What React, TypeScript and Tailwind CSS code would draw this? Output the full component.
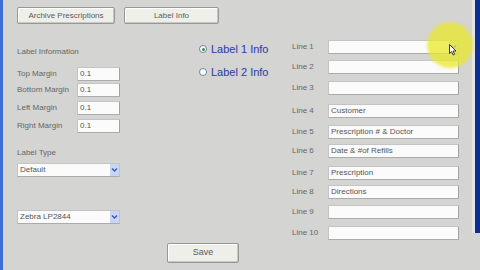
import React from 'react';

const font = "font-['Liberation_Sans',Arial,sans-serif]";

function TextBox({ value, className = '' }: { value?: string; className?: string }) {
  return (
    <div
      className={`h-[14px] bg-[#fbfbfb] border border-[#c4c4c4] border-r-[#a2a2a2] border-b-[#ababab] rounded-[1px] px-[2px] flex items-center text-[8px] text-[#555] leading-none ${className}`}
    >
      {value}
    </div>
  );
}

function Combo({ value, className = '' }: { value?: string; className?: string }) {
  return (
    <div
      className={`h-[14px] bg-[#fbfbfb] border border-[#c4c4c4] border-b-[#ababab] flex items-center text-[8px] text-[#555] leading-none ${className}`}
    >
      <span className="flex-1 px-[2px] truncate">{value}</span>
      <span className="w-[9px] h-[12px] bg-[#c9d6f2] flex items-center justify-center">
        <svg width="7" height="6" viewBox="0 0 7 6">
          <path d="M1 1.5 L3.5 4 L6 1.5" stroke="#3b5bb5" strokeWidth="1.4" fill="none" />
        </svg>
      </span>
    </div>
  );
}

function MarginRow({ label, mt }: { label: string; mt: string }) {
  return (
    <div className={`flex items-center justify-between h-[14px] w-[103px] ${mt}`}>
      <span className="text-[8px] text-[#666]">{label}</span>
      <TextBox value="0.1" className="w-[43px]" />
    </div>
  );
}

function Btn({ label, className = '' }: { label: string; className?: string }) {
  return (
    <div
      className={`bg-[#efefea] border border-[#979797] rounded-[2px] shadow-[inset_-1px_-1px_0_#c8c8c4,inset_1px_1px_0_#ffffff] flex items-center justify-center text-[8px] text-[#5a5a5a] ${className}`}
    >
      {label}
    </div>
  );
}

function Radio({ label, checked, mt }: { label: string; checked?: boolean; mt: string }) {
  return (
    <div className={`flex items-center h-[12px] ${mt}`}>
      <span className="w-[8px] h-[8px] rounded-full border border-[#6d7fa8] bg-white flex items-center justify-center">
        {checked && <span className="w-[3px] h-[3px] rounded-full bg-[#3b8a4a]" />}
      </span>
      <span className="ml-[4px] text-[11px] text-[#2b3f96] [text-shadow:0_0_2px_#c8c8f0]">{label}</span>
    </div>
  );
}

const lines: { n: number; value?: string; mt: string; combo?: boolean }[] = [
  { n: 1, mt: 'mt-[16px]', combo: true },
  { n: 2, mt: 'mt-[6px]' },
  { n: 3, mt: 'mt-[7px]' },
  { n: 4, value: 'Customer', mt: 'mt-[9px]' },
  { n: 5, value: 'Prescription # & Doctor', mt: 'mt-[7px]' },
  { n: 6, value: 'Date & #of Refills', mt: 'mt-[5px]' },
  { n: 7, value: 'Prescription', mt: 'mt-[8px]' },
  { n: 8, value: 'Directions', mt: 'mt-[5px]' },
  { n: 9, mt: 'mt-[6px]' },
  { n: 10, mt: 'mt-[7px]' },
];

export default function App() {
  return (
    <div className={`relative w-[480px] h-[270px] overflow-hidden bg-[#d4d4d2] flex ${font}`}>
      <div className="w-[3px] h-full bg-[#3a6ed6]" />

      <div className="flex-1 flex flex-col">
        <div className="flex pt-[7px] pl-[14px] gap-[9px]">
          <Btn label="Archive Prescriptions" className="w-[98px] h-[17px]" />
          <Btn label="Label Info" className="w-[95px] h-[17px]" />
        </div>

        <div className="flex">
          <div className="ml-[14px] w-[222px] flex flex-col">
            <div className="mt-[23px] h-[10px] leading-[10px] text-[8px] text-[#666]">Label Information</div>
            <MarginRow label="Top Margin" mt="mt-[10px]" />
            <MarginRow label="Bottom Margin" mt="mt-[2px]" />
            <MarginRow label="Left Margin" mt="mt-[4px]" />
            <MarginRow label="Right Margin" mt="mt-[4px]" />
            <div className="mt-[15px] h-[10px] leading-[10px] text-[8px] text-[#666]">Label Type</div>
            <Combo value="Default" className="mt-[5px] w-[103px]" />
            <Combo value="Zebra  LP2844" className="mt-[33px] w-[103px]" />
            <Btn label="Save" className="mt-[19px] ml-[150px] w-[72px] h-[20px] text-[9px]" />
          </div>

          <div className="ml-[-40px] w-[93px] flex flex-col">
            <Radio label="Label 1 Info" checked mt="mt-[19px]" />
            <Radio label="Label 2 Info" mt="mt-[11px]" />
          </div>

          <div className="flex flex-col">
            {lines.map((l) => (
              <div key={l.n} className={`flex items-center h-[14px] ${l.mt}`}>
                <span className="w-[36px] text-[8px] text-[#666]">Line {l.n}</span>
                {l.combo ? (
                  <Combo className="w-[131px]" />
                ) : (
                  <TextBox value={l.value} className="w-[131px]" />
                )}
              </div>
            ))}
          </div>
        </div>
      </div>

      <div className="w-[3px] h-[233px] bg-[#e4e4e2]" />
      <div className="w-[5px] h-[233px] bg-[#0c2f94]" />

      {/* cursor highlight */}
      <div className="absolute left-[427px] top-[22px] w-[46px] h-[46px] rounded-full bg-[#e9e82a]/75 blur-[1.5px]" />
      <svg className="absolute left-[449px] top-[44px]" width="8" height="12" viewBox="0 0 8 12">
        <path d="M0.5 0.5 L0.5 9.5 L2.6 7.6 L4.2 11 L5.6 10.3 L4 7 L7 7 Z" fill="#fff" stroke="#111" strokeWidth="0.8" />
      </svg>
    </div>
  );
}
